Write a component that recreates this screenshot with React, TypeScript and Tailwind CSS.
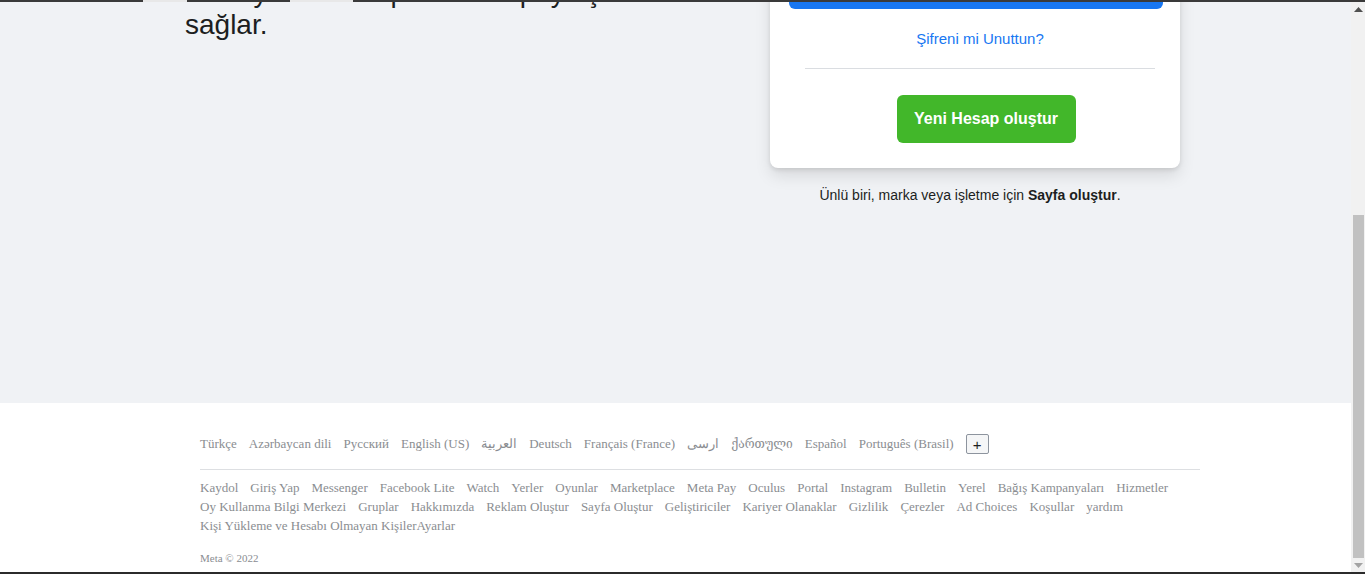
import React from "react";

const sans = { fontFamily: '"Liberation Sans", Arial, sans-serif' };

const langs = [
  "Türkçe",
  "Azərbaycan dili",
  "Русский",
  "English (US)",
  "العربية",
  "Deutsch",
  "Français (France)",
  "ارسی",
  "ქართული",
  "Español",
  "Português (Brasil)",
];

const row1 = [
  "Kaydol",
  "Giriş Yap",
  "Messenger",
  "Facebook Lite",
  "Watch",
  "Yerler",
  "Oyunlar",
  "Marketplace",
  "Meta Pay",
  "Oculus",
  "Portal",
  "Instagram",
  "Bulletin",
  "Yerel",
  "Bağış Kampanyaları",
  "Hizmetler",
];

const row2 = [
  "Oy Kullanma Bilgi Merkezi",
  "Gruplar",
  "Hakkımızda",
  "Reklam Oluştur",
  "Sayfa Oluştur",
  "Geliştiriciler",
  "Kariyer Olanaklar",
  "Gizlilik",
  "Çerezler",
  "Ad Choices",
  "Koşullar",
  "yardım",
];

function Scrollbar() {
  return (
    <div className="w-[14px] shrink-0 bg-[#f1f1f1] flex flex-col">
      <div className="h-[15px] flex items-center justify-center pt-[3px]">
        <svg width="9" height="5" viewBox="0 0 9 5">
          <polygon points="0,5 9,5 4.5,0" fill="#505050" />
        </svg>
      </div>
      <div className="h-[200px]" />
      <div className="h-[343px] ml-[2px] mr-[1px] bg-[#c1c1c1]" />
      <div className="flex-1 flex items-center justify-center pb-[2px]">
        <svg width="9" height="5" viewBox="0 0 9 5">
          <polygon points="0,0 9,0 4.5,5" fill="#a3a3a3" />
        </svg>
      </div>
    </div>
  );
}

export default function App() {
  return (
    <div className="relative w-full h-[574px] overflow-hidden flex bg-white">
      <div className="flex-1 flex flex-col min-w-0">
        {/* top gray section */}
        <div className="h-[403px] bg-[#f0f2f5] overflow-hidden flex items-start pl-[185px]">
          <div className="w-[585px] shrink-0">
            <p
              className="mt-[-55px] text-[28px] leading-[32px] text-[#1c1e21] whitespace-nowrap"
              style={sans}
            >
              Facebook, tanıdıklarınla iletişim kurmanı
              <br />
              ve hayatında olup bitenleri paylaşmanı
              <br />
              sağlar.
            </p>
          </div>
          <div className="w-[410px] shrink-0 flex flex-col" style={sans}>
            <div className="mt-[-57px] bg-white rounded-[8px] shadow-[0_2px_4px_rgba(0,0,0,0.1),0_8px_16px_rgba(0,0,0,0.1)] pt-[18px] pb-[25px] pl-[19px] pr-[17px] flex flex-col">
              <div className="h-[48px] rounded-[6px] bg-[#1877f2] flex items-center justify-center text-white text-[20px] font-bold">
                Giriş Yap
              </div>
              <div className="mt-[20px] h-[20px] leading-[20px] text-[15px] text-[#1877f2] flex justify-center pl-[8px]">
                Şifreni mi Unuttun?
              </div>
              <div className="mt-[19px] h-px bg-[#dadde1] ml-[16px] mr-[8px]" />
              <div className="mt-[26px] flex justify-center pl-[20px]">
                <div className="h-[48px] w-[179px] rounded-[6px] bg-[#42b72a] flex items-center justify-center text-white text-[16px] font-bold">
                  Yeni Hesap oluştur
                </div>
              </div>
            </div>
            <div className="mt-[19px] leading-[17px] text-[14px] text-[#1c1e21] text-center pr-[10px]">
              Ünlü biri, marka veya işletme için <span className="font-bold">Sayfa oluştur</span>.
            </div>
          </div>
        </div>

        {/* footer */}
        <div
          className="flex-1 bg-white pl-[200px] pt-[31px] text-[#8a8d91]"
          style={{ fontFamily: '"Liberation Serif", "DejaVu Serif", serif' }}
        >
          <div className="w-[1000px]">
            <div className="h-[20px] flex items-center gap-x-[12px] text-[13px] whitespace-nowrap">
              {langs.map((l) => (
                <span key={l} className={l === "ქართული" ? "text-[12px]" : ""}>
                  {l}
                </span>
              ))}
              <span
                className="w-[23px] h-[20px] border border-[#8d949e] bg-[#f5f6f7] rounded-[2px] flex items-center justify-center text-[#1c1e21] text-[15px] leading-none"
                style={sans}
              >
                +
              </span>
            </div>
            <div className="mt-[15px] h-px bg-[#dddfe2]" />
            <div className="mt-[8px] text-[13px] leading-[19px]">
              <div className="flex gap-x-[12px] whitespace-nowrap">
                {row1.map((l) => (
                  <span key={l}>{l}</span>
                ))}
              </div>
              <div className="flex gap-x-[12px] whitespace-nowrap">
                {row2.map((l) => (
                  <span key={l}>{l}</span>
                ))}
              </div>
              <div className="flex whitespace-nowrap">
                <span>Kişi Yükleme ve Hesabı Olmayan Kişiler</span>
                <span>Ayarlar</span>
              </div>
            </div>
            <div className="mt-[17px] text-[11px] leading-[13px]">Meta © 2022</div>
          </div>
        </div>
      </div>
      <Scrollbar />

      {/* window frame edges */}
      <div className="absolute top-0 left-0 right-0 h-[2px] bg-[#3a3a3a] flex">
        <div className="ml-[143px] w-[44px] bg-[#e8e8e8]" />
        <div className="ml-[103px] w-[63px] bg-[#e8e8e8]" />
      </div>
      <div className="absolute bottom-0 left-0 right-0 h-[2px] bg-[#2b2b2b]" />
    </div>
  );
}
